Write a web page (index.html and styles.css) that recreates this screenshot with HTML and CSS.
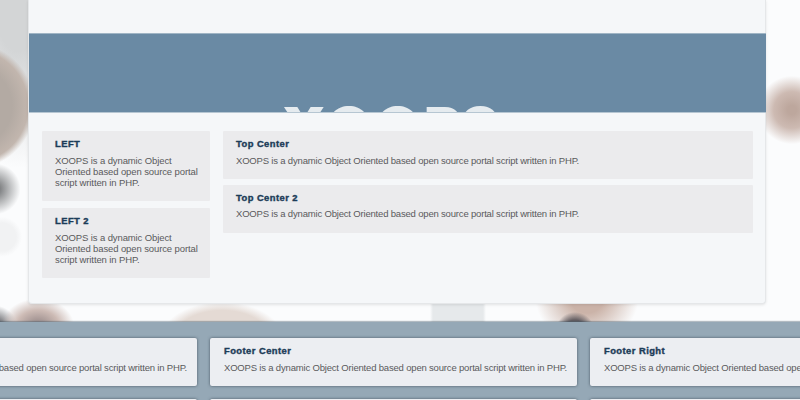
FILE: index.html
```
<!DOCTYPE html>
<html lang="en">
<head>
<meta charset="utf-8">
<title>XOOPS</title>
<link rel="stylesheet" href="styles.css">
</head>
<body>
<div class="backdrop">
<main class="page">
  <header class="hero"><div class="logo">XOO<span>PS</span></div></header>
  <div class="content">
    <aside class="column side">
      <section class="block"><h2>LEFT</h2><p>XOOPS is a dynamic Object Oriented based open source portal script written in PHP.</p></section>
      <section class="block"><h2>LEFT 2</h2><p>XOOPS is a dynamic Object Oriented based open source portal script written in PHP.</p></section>
    </aside>
    <div class="column">
      <section class="block"><h2>Top Center</h2><p>XOOPS is a dynamic Object Oriented based open source portal script written in PHP.</p></section>
      <section class="block"><h2>Top Center 2</h2><p>XOOPS is a dynamic Object Oriented based open source portal script written in PHP.</p></section>
    </div>
  </div>
</main>
</div>
<footer class="footer">
  <section class="card"><p>XOOPS is a dynamic Object Oriented based open source portal script written in PHP.</p></section>
  <section class="card"><h2>Footer Center</h2><p>XOOPS is a dynamic Object Oriented based open source portal script written in PHP.</p></section>
  <section class="card"><h2>Footer Right</h2><p>XOOPS is a dynamic Object Oriented based open source portal script written in PHP.</p></section>
  <section class="card"></section>
  <section class="card"></section>
  <section class="card"></section>
</footer>
</body>
</html>
```
FILE: styles.css
```
* { box-sizing: border-box; }
body {
  margin: 0;
  height: 400px;
  overflow: hidden;
  font: 9.5px/11.3px "Liberation Sans", Arial, sans-serif;
  color: #5a5a5c;
}
.backdrop {
  height: 322px;
  background:
    radial-gradient(circle at 575px 332px, #625c60 0 12px, transparent 20px),
    radial-gradient(ellipse 56px 50px at 587px 298px, #cbb3a8 0 30%, transparent 92%),
    radial-gradient(circle 38px at 792px 110px, #bda79d 0 12%, #cdbab2 48%, transparent 90%),
    radial-gradient(circle 30px at -5px 189px, #6c6e70 0 5%, transparent 85%),
    radial-gradient(circle at 2px 237px, #f1f2f3 0 14px, transparent 20px),
    radial-gradient(circle at -28px 106px, #b3aaa3 0 40px, #c2b6ae 56px, transparent 63px),
    radial-gradient(ellipse 38px 29px at 38px 326px, #948686 0 5%, #cdbbb5 55%, transparent 95%),
    radial-gradient(circle 26px at -6px 330px, #77777b 0 40%, transparent 95%),
    radial-gradient(ellipse 62px 38px at 222px 340px, #e4dad4 0 78%, transparent 100%),
    linear-gradient(90deg, transparent 430px, #e6e9eb 433px 483px, transparent 486px),
    radial-gradient(ellipse 75px 180px at 18px -12px, #d3d5d6 0 35%, transparent 100%),
    #fbfcfd;
}
.page {
  width: 738px;
  height: 304px;
  margin-left: 28px;
  padding-top: 33px;
  background: #f5f7f9;
  border: 1px solid #e5e7e9;
  border-top: 0;
  border-radius: 0 0 4px 4px;
  box-shadow: 0 1px 3px rgba(0, 0, 0, .1);
}
.hero {
  height: 80px;
  margin-right: -1px;
  overflow: hidden;
  background: #6a8aa4;
  border-top: 1px solid #a0b5c5;
  border-bottom: 1px solid #b6c6d2;
}
.logo {
  width: max-content;
  margin: 65px 0 0 252px;
  font: 900 58px/58px Inter, sans-serif;
  letter-spacing: 3.8px;
  color: #e5ebef;
}
.logo span { letter-spacing: -1.5px; }
.content {
  display: grid;
  grid-template-columns: 168px 530px;
  gap: 13px;
  padding: 18px 13px 0;
}
.column { display: flex; flex-direction: column; gap: 6px; }
.column.side { gap: 6.7px; }
.block {
  padding: 7px 8px 13px 13px;
  background: #ebebed;
  border-radius: 1px;
}
h2 {
  margin: 0 0 5.5px;
  font: bold 9.4px/11px "Liberation Sans", Arial, sans-serif;
  letter-spacing: .45px;
  color: #1c3c58;
  -webkit-text-stroke: .4px #1c3c58;
}
p { margin: 0; letter-spacing: -.18px; }
.side p { letter-spacing: -.11px; }
.footer {
  display: grid;
  grid-template-columns: repeat(3, 367px);
  grid-auto-rows: 48px;
  gap: 13px;
  width: 970px;
  height: 78px;
  margin-left: -170px;
  padding-top: 16px;
  background: #95a8b6;
  box-shadow: 0 -1px 1px rgba(70, 90, 105, .4);
  overflow: hidden;
}
.card {
  display: flex;
  flex-direction: column;
  justify-content: flex-end;
  padding: 7px 0 13px 14px;
  white-space: nowrap;
  background: #eceef2;
  border-radius: 2px;
  box-shadow: 0 0 3px rgba(50, 65, 78, .8);
}
```
